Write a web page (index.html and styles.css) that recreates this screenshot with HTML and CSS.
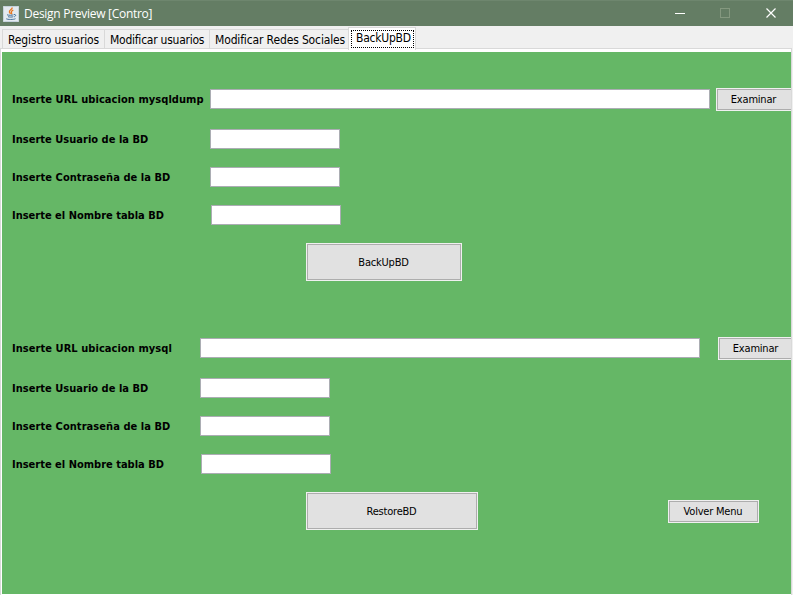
FILE: index.html
```html
<!DOCTYPE html>
<html lang="es">
<head>
<meta charset="utf-8">
<title>Design Preview [Contro]</title>
<link rel="stylesheet" href="styles.css">
</head>
<body>
<div class="window">
  <header class="titlebar">
    <svg class="app-icon" width="16" height="16" viewBox="0 0 16 16">
      <rect width="16" height="16" rx="1" fill="#e4eaf0"/>
      <rect x=".5" y=".5" width="15" height="15" rx="1" fill="none" stroke="#c5d2dc"/>
      <path d="M9.200 1.500C9.500 3.500 5.800 4.200 6.400 6c.2.7 1 1.100.9 2M10.300 4.200C8.500 5 7.800 5.800 8.600 6.800c.3.500.1 1-.3 1.400" fill="none" stroke="#e87722" stroke-width="1.300"/>
      <path d="M4 8.800c1.500.6 5 .6 6.500 0M5 10.700c1.500.5 4 .5 5.300 0M11 8.500c2.200-.4 2.200 1.600.2 2.300M3.200 12.700c1 1 7.800 1 9.300 0" fill="none" stroke="#45719b"/>
    </svg>
    <span class="title">Design Preview [Contro]</span>
    <svg class="controls" width="104" height="12" viewBox="0 0 104 12" fill="none">
      <path d="M0 6.500h10" stroke="#fff"/>
      <rect x="45.500" y="1.500" width="9" height="9" stroke="#84987f"/>
      <path d="M91.500 1.500l9 9m0-9l-9 9" stroke="#fff" stroke-width="1.200"/>
    </svg>
  </header>
  <nav class="tabs">
    <div class="tab t1"><span>Registro usuarios</span></div>
    <div class="tab t2"><span>Modificar usuarios</span></div>
    <div class="tab t3"><span>Modificar Redes Sociales</span></div>
    <div class="tab active"><span>BackUpBD</span></div>
  </nav>
  <main class="pane">
    <section class="form backup">
      <div class="row first"><label class="l-dump">Inserte URL ubicacion mysqldump</label><input class="wide"><button class="browse">Examinar</button></div>
      <div class="row"><label class="l-user">Inserte Usuario de la BD</label><input></div>
      <div class="row"><label class="l-pass">Inserte Contraseña de la BD</label><input></div>
      <div class="row shifted"><label class="l-name">Inserte el Nombre tabla BD</label><input></div>
      <div class="actions"><button class="run">BackUpBD</button></div>
    </section>
    <section class="form restore">
      <div class="row first"><label class="l-sql">Inserte URL ubicacion mysql</label><input class="wide"><button class="browse">Examinar</button></div>
      <div class="row"><label class="l-user">Inserte Usuario de la BD</label><input></div>
      <div class="row"><label class="l-pass">Inserte Contraseña de la BD</label><input></div>
      <div class="row shifted"><label class="l-name">Inserte el Nombre tabla BD</label><input></div>
      <div class="actions"><button class="run">RestoreBD</button><button class="back">Volver Menu</button></div>
    </section>
  </main>
</div>
</body>
</html>
```
FILE: styles.css
```css
* { box-sizing: border-box; }
body { margin: 0; overflow: hidden; }
.window {
  width: 793px;
  height: 595px;
  display: flex;
  flex-direction: column;
  background: #f0f0f0;
  font-family: Tahoma, "DejaVu Sans Condensed", "DejaVu Sans", sans-serif;
  font-stretch: condensed;
  color: #000;
}
.titlebar {
  height: 26px;
  flex: none;
  display: flex;
  align-items: center;
  padding: 0 14px 0 3px;
  background: #647d64;
  border-top: 1px solid #6e866e;
  color: #fff;
  font: 12px "Open Sans", sans-serif;
}
.title { margin: -1px 0 0 5px; white-space: nowrap; letter-spacing: -0.28px; }
.controls { margin: -1px 0 0 auto; }
.tabs {
  height: 22px;
  flex: none;
  display: flex;
  align-items: flex-end;
  padding-left: 2px;
  font-size: 12px;
}
.tab {
  height: 19px;
  padding-left: 5px;
  border: 1px solid #d9d9d9;
  border-width: 1px 0 0 1px;
  line-height: 20px;
  white-space: nowrap;
}
.t1 { width: 102px; letter-spacing: -0.12px; }
.t2 { width: 105px; letter-spacing: -0.24px; }
.t3 { width: 139px; letter-spacing: -0.14px; }
.tab.active {
  width: 68px;
  height: 23px;
  margin-bottom: -2px;
  padding: 2px 1px 0 2px;
  border-right-width: 1px;
  background: #fff;
  letter-spacing: -0.24px;
  z-index: 1;
}
.active span {
  display: block;
  height: 18px;
  padding-left: 4px;
  border: 1px dotted #000;
  line-height: 15px;
}
.pane {
  flex: 1;
  min-height: 0;
  margin-right: 1px;
  border: 1px solid #d9d9d9;
  border-bottom: 0;
  box-shadow: inset 1px 3px #fff, inset 0 -1px #fff;
  padding: 3px 0 1px 1px;
  background: #65b766;
  overflow: hidden;
}
.form { height: 249px; padding: 36px 0 0 10px; }
.row { display: flex; align-items: center; height: 20px; margin-bottom: 18px; }
.row.first { height: 23px; }
label {
  flex: none;
  width: 198px;
  padding-top: 2px;
  font-size: 11px;
  font-weight: bold;
  letter-spacing: 0.06px;
  white-space: nowrap;
  line-height: 20px;
}
.first label { padding-top: 0; }
.l-user { letter-spacing: 0.02px; }
.l-name { letter-spacing: 0; }
.restore label { width: 188px; }
.row input {
  flex: none;
  width: 130px;
  height: 20px;
  padding: 0 4px;
  border: 1px solid #abadb3;
  background: #fff;
}
.row input.wide { width: 500px; margin-bottom: 2px; }
.shifted input { margin-left: 1px; }
button {
  flex: none;
  height: 23px;
  padding: 0;
  border: 1px solid #adadad;
  outline: 1px solid #f0f0f0;
  outline-offset: 0;
  background: #e1e1e1;
  color: #000;
  font: 11px Tahoma, "DejaVu Sans Condensed", "DejaVu Sans", sans-serif;
  font-stretch: condensed;
  letter-spacing: -0.2px;
}
.browse { width: 75px; height: 21px; margin-left: 7px; padding-right: 3px; border-right: 0; }
.restore .browse { width: 73px; margin-left: 19px; padding-right: 1px; }
.actions { display: flex; align-items: center; height: 38px; padding-left: 295px; }
.run { width: 154px; height: 36px; padding-right: 1px; }
.restore .run { width: 170px; }
.back { width: 89px; height: 21px; margin-left: 192px; padding-right: 1px; }
```
